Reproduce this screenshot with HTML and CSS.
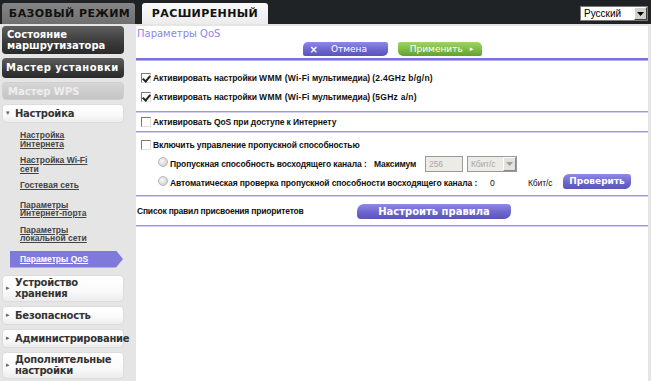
FILE: index.html
```html
<!DOCTYPE html>
<html lang="ru">
<head>
<meta charset="utf-8">
<link rel="stylesheet" href="styles.css">
</head>
<body>
<header class="topbar">
  <div class="tabs">
    <div class="tab tab-basic">БАЗОВЫЙ РЕЖИМ</div>
    <div class="tab tab-adv">РАСШИРЕННЫЙ</div>
  </div>
  <div class="lang">
    <span class="lang-text">Русский</span>
    <span class="lang-btn"><svg width="7" height="4" viewBox="0 0 7 4"><path d="M0 0h7L3.5 4z" fill="#000"/></svg></span>
  </div>
</header>
<div class="page">
  <nav class="sidebar">
    <div class="nav-btn dark two">Состояние маршрутизатора</div>
    <div class="nav-btn dark wide">Мастер установки</div>
    <div class="nav-btn disabled">Мастер WPS</div>
    <div class="nav-sec open"><span class="tri">▾</span>Настройка</div>
    <ul class="sublinks">
      <li><a>Настройка<br>Интернета</a></li>
      <li><a>Настройка Wi-Fi<br>сети</a></li>
      <li class="guest"><a>Гостевая сеть</a></li>
      <li><a>Параметры<br>Интернет-порта</a></li>
      <li><a>Параметры<br>локальной сети</a></li>
      <li class="active"><a>Параметры QoS</a></li>
    </ul>
    <div class="nav-sec two"><span class="tri">▸</span><span>Устройство<br>хранения</span></div>
    <div class="nav-sec"><span class="tri">▸</span>Безопасность</div>
    <div class="nav-sec"><span class="tri">▸</span>Администрирование</div>
    <div class="nav-sec two"><span class="tri">▸</span><span>Дополнительные<br>настройки</span></div>
  </nav>
  <main class="main">
    <div class="title">Параметры QoS</div>
    <div class="actions">
      <span class="btn btn-cancel"><span class="x">×</span>Отмена</span>
      <span class="btn btn-apply">Применить<span class="arr">▸</span></span>
    </div>
    <div class="rule thick"></div>
    <div class="block first">
      <label class="row"><span class="cb checked"></span><span>Активировать настройки <span class="lat">WMM (Wi-Fi</span> мультимедиа) <span class="lat">(2.4GHz b/g/n)</span></span></label>
      <label class="row"><span class="cb checked"></span><span>Активировать настройки <span class="lat">WMM (Wi-Fi</span> мультимедиа) <span class="lat">(5GHz a/n)</span></span></label>
    </div>
    <div class="rule"></div>
    <div class="block single">
      <label class="row"><span class="cb"></span>Активировать QoS при доступе к Интернету</label>
    </div>
    <div class="rule"></div>
    <div class="block bw">
      <label class="row"><span class="cb"></span>Включить управление пропускной способностью</label>
      <div class="row sub">
        <span class="radio"></span>
        <span class="lbl lbl1">Пропускная способность восходящего канала :</span>
        <span class="max">Максимум</span>
        <span class="inp">256</span>
        <span class="sel">Кбит/с<span class="sel-btn"><svg width="7" height="4" viewBox="0 0 7 4"><path d="M0 0h7L3.5 4z" fill="#a0a0a0"/></svg></span></span>
      </div>
      <div class="row sub">
        <span class="radio"></span>
        <span class="lbl lbl2">Автоматическая проверка пропускной способности восходящего канала :</span>
        <span class="zero">0</span>
        <span class="unit">Кбит/с</span>
        <span class="btn btn-check">Проверить</span>
      </div>
    </div>
    <div class="rule"></div>
    <div class="rules-row">
      <span class="rules-label">Список правил присвоения приоритетов</span>
      <span class="btn btn-rules">Настроить правила</span>
    </div>
    <div class="rule"></div>
  </main>
</div>
</body>
</html>
```
FILE: styles.css
```css
* { box-sizing: border-box; }
html, body { margin: 0; padding: 0; }
body {
  width: 651px;
  height: 381px;
  overflow: hidden;
  background: #e5e5e5;
  font-family: "Liberation Sans", Arial, sans-serif;
}
.topbar {
  height: 24px;
  background: #1f2326;
  display: flex;
  justify-content: space-between;
  align-items: flex-start;
}
.tabs { display: flex; padding-top: 3px; padding-left: 2px; gap: 7px; }
.tab {
  height: 21px;
  font-family: "DejaVu Sans", Verdana, sans-serif;
  font-weight: bold;
  font-size: 11px;
  letter-spacing: 0.4px;
  line-height: 21px;
  white-space: nowrap;
  text-align: center;
  border-radius: 3px 3px 0 0;
}
.tab-basic { background: linear-gradient(#858585, #6f6f6f); color: #111; width: 133px; padding-left: 2px; }
.tab-adv { background: linear-gradient(#fafafa, #ececec); color: #111; width: 126px; }
.lang {
  margin-top: 6px;
  margin-right: 3px;
  width: 68px;
  height: 15px;
  background: #fff;
  border: 1px solid #7a7a7a;
  display: flex;
  align-items: center;
  justify-content: space-between;
  font-size: 10px;
  padding-left: 3px;
}
.lang-btn {
  width: 13px; height: 13px;
  background: #d4d0c8;
  border: 1px solid #fff;
  border-right-color: #404040; border-bottom-color: #404040;
  display: flex; align-items: center; justify-content: center;
}
.page { display: flex; height: 357px; }
.sidebar {
  width: 136px;
  flex: none;
  padding: 2px 0 0 2px;
  font-family: "DejaVu Sans", Verdana, sans-serif;
}
.nav-btn {
  width: 122px;
  border-radius: 4px;
  font-weight: bold;
  font-size: 10px;
  line-height: 11px;
  padding: 4px 5px;
  margin-bottom: 4px;
  white-space: nowrap;
}
.nav-btn.dark {
  background: linear-gradient(#5e5e5e, #3a3a3a 60%, #2a2a2a);
  color: #fff;
  height: 20px;
}
.nav-btn.dark.wide { letter-spacing: 0.5px; padding-left: 4px; }
.nav-btn.dark.two { height: 28px; padding-top: 3px; white-space: normal; }
.nav-btn.disabled {
  background: linear-gradient(#d6d6d6, #c4c4c4);
  color: #eeeeee;
  height: 18px;
  padding-top: 3px;
  border: 1px solid #d0d0d0;
}
.nav-sec {
  width: 122px;
  height: 19px;
  background: linear-gradient(#ffffff, #fafafa 60%, #ececec);
  border: 1px solid #dcdcdc;
  border-radius: 4px;
  font-weight: bold;
  font-size: 10px;
  line-height: 11px;
  letter-spacing: -0.25px;
  color: #333;
  display: flex;
  align-items: center;
  padding-left: 3px;
  margin-bottom: 4px;
  white-space: nowrap;
}
.nav-sec.two { height: 27px; }
.nav-sec .tri { font-size: 7px; color: #666; width: 9px; flex: none; letter-spacing: 0; }
.nav-sec.two .tri { margin-top: 1px; }
.sublinks { list-style: none; margin: 0; padding: 4px 0 0 0; }
.sublinks li {
  font-family: "Liberation Sans", Arial, sans-serif;
  font-weight: bold;
  font-size: 8.5px;
  line-height: 8.5px;
  color: #444;
  padding-left: 18px;
  margin-bottom: 8px;
}
.sublinks li.guest { margin-bottom: 11px; }
.sublinks a { text-decoration: underline; }
.sublinks li.active {
  margin-left: 8px;
  padding-left: 10px;
  width: 113px;
  height: 17px;
  line-height: 17px;
  color: #fff;
  background: #7f79dc;
  clip-path: polygon(0 0, 106px 0, 100% 50%, 106px 100%, 0 100%);
  margin-top: 5px;
  margin-bottom: 7px;
}
.main {
  flex: 1;
  background: #fff;
  margin: 2px 3px 0 0;
  font-family: "Liberation Sans", Arial, sans-serif;
  font-size: 8.5px;
  letter-spacing: -0.1px;
  font-weight: bold;
  color: #111;
}
.lat { letter-spacing: 0.25px; }
.title {
  font-family: "DejaVu Sans", Verdana, sans-serif;
  font-weight: normal;
  font-size: 10px;
  letter-spacing: 0;
  color: #8d84ec;
  padding: 2px 0 0 1px;
  height: 16px;
}
.actions { display: flex; justify-content: center; gap: 10px; height: 16px; }
.btn {
  display: inline-flex;
  align-items: center;
  justify-content: center;
  height: 14px;
  border-radius: 5px;
  color: #fff;
  font-family: "DejaVu Sans", Verdana, sans-serif;
  font-size: 9px;
  letter-spacing: 0;
  font-weight: normal;
  white-space: nowrap;
  flex: none;
}
.btn-cancel {
  width: 85px;
  background: linear-gradient(#8f89e6, #6d66cf 55%, #5a53b8);
  justify-content: flex-start;
  padding-left: 7px;
  border-radius: 5px 2px 5px 2px;
}
.btn-cancel .x { font-weight: bold; font-size: 10px; margin-right: 13px; }
.btn-apply {
  width: 84px;
  background: linear-gradient(#9ed46a, #7cba45 55%, #62a030);
  border-radius: 2px 5px 2px 5px;
  padding-left: 4px;
}
.btn-apply .arr { font-size: 7px; margin-left: 7px; }
.rule {
  height: 2px;
  background: #9d97e8;
  border-bottom: 1px solid #d3cff5;
}
.rule.thick { background: #7a72da; border-bottom-color: #b3aef0; height: 3px; }
.block { padding: 7px 0 5px 5px; }
.block.single { padding: 0 0 0 5px; }
.block.single .row { height: 18px; }
.block.bw { padding: 2px 0 3px 5px; }
.row { display: flex; align-items: center; height: 19px; white-space: nowrap; }
.cb {
  width: 10px; height: 10px;
  border: 1px solid #7a7a7a;
  border-right-color: #e0e0e0; border-bottom-color: #e0e0e0;
  background: #fff;
  margin-right: 2px;
  position: relative;
  flex: none;
}
.cb.checked::after {
  content: "";
  position: absolute;
  left: 2px; top: 0px;
  width: 3px; height: 6px;
  border: solid #222;
  border-width: 0 2px 2px 0;
  transform: rotate(40deg);
}
.row.sub { padding-left: 17px; }
.radio {
  width: 10px; height: 10px;
  border-radius: 50%;
  background: radial-gradient(circle at 40% 40%, #fafafa, #c4c4c4);
  border: 1px solid #b8b8b8;
  margin-top: -3px;
  flex: none;
}
.lbl { flex: none; padding-left: 2px; }
.lbl1 { width: 206px; }
.lbl2 { width: 322px; }
.max { width: 51px; flex: none; }
.inp {
  width: 38px; height: 16px;
  background: #ecebe6;
  border: 1px solid #9a9a9a;
  color: #a9a9a9;
  font-weight: normal;
  padding-left: 3px;
  display: inline-flex; align-items: center;
  flex: none;
}
.sel {
  width: 50px; height: 16px;
  margin-left: 4px;
  background: #ecebe6;
  border: 1px solid #9a9a9a;
  color: #a9a9a9;
  font-weight: normal;
  display: inline-flex; align-items: center; justify-content: space-between;
  padding-left: 3px;
  flex: none;
}
.sel-btn {
  width: 13px; height: 14px;
  background: #e4e2dc;
  border: 1px solid #fff;
  border-right-color: #888; border-bottom-color: #888;
  display: inline-flex; align-items: center; justify-content: center;
}
.zero { width: 38px; flex: none; font-weight: normal; }
.unit { width: 35px; flex: none; font-weight: normal; }
.btn-check {
  width: 68px;
  font-weight: bold;
  background: linear-gradient(#8f89e6, #6d66cf 55%, #5a53b8);
  border-radius: 6px 3px 6px 3px;
  height: 15px;
  margin-top: -3px;
}
.rules-row { display: flex; align-items: center; padding-left: 1px; height: 28px; letter-spacing: -0.2px; }
.rules-label { width: 220px; flex: none; }
.btn-rules {
  width: 154px;
  font-weight: bold;
  font-size: 10px;
  background: linear-gradient(#8f89e6, #6d66cf 55%, #5a53b8);
  border-radius: 7px 4px 7px 4px;
  height: 15px;
}
```
